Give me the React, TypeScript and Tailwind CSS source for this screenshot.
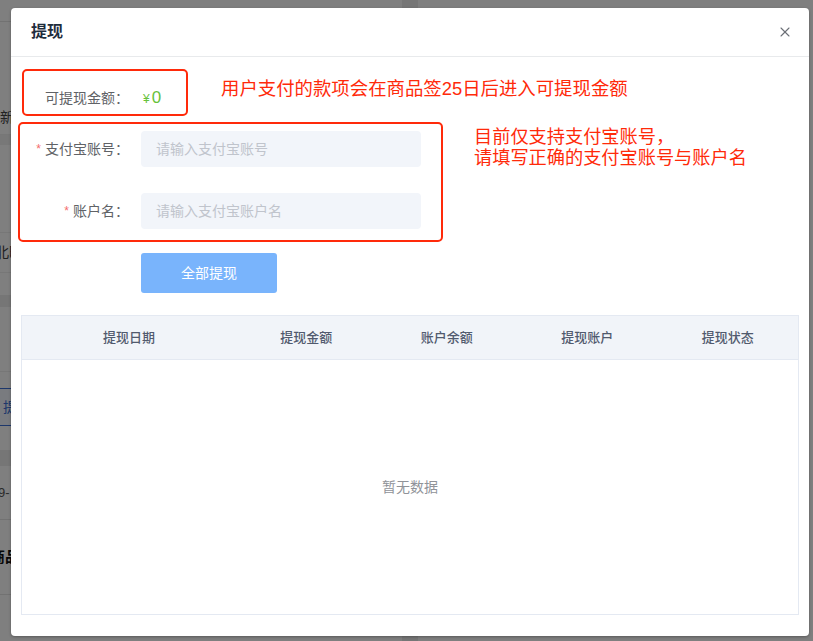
import React from "react";
import { X } from "lucide-react";

const font = { fontFamily: "'Liberation Sans', 'Noto Sans CJK SC', sans-serif" };

function BackgroundPage() {
  return (
    <div className="flex h-[641px] w-[813px] bg-white text-[14px] text-[#333]">
      <div className="flex w-[402px] flex-col">
        <div className="h-[22px] border-b border-[#e5e5e5]" />
        <div className="h-[78px]" />
        <div className="flex h-[35px] items-center border-b border-[#eee]">
          <span className="-ml-[14px] text-[14px] text-[#444]">更新</span>
        </div>
        <div className="h-[10px] bg-[#f0f0f0]" />
        <div className="h-[88px] border-b border-[#eee]" />
        <div className="flex h-[40px] items-center border-b border-[#eee]">
          <span className="-ml-[5px] text-[14px] text-[#444]">北时</span>
        </div>
        <div className="h-[22px]" />
        <div className="h-[12px] bg-[#ececec]" />
        <div className="h-[65px] border-b border-[#eee]" />
        <div className="flex h-[70px] items-center">
          <span className="-ml-[6px] flex h-[38px] items-center border border-[#3b6fd6] bg-[#f3f7ff] px-[8px] text-[14px] text-[#3b6fd6]">
            提货
          </span>
        </div>
        <div className="h-[8px]" />
        <div className="h-[16px] bg-[#ececec]" />
        <div className="flex h-[54px] items-center border-b border-[#e5e5e5]">
          <span className="-ml-[2px] text-[13px] text-[#555]">9-</span>
        </div>
        <div className="flex h-[75px] items-center border-b border-[#e5e5e5]">
          <span className="-ml-[10px] text-[15px] font-bold text-[#111]">商品</span>
        </div>
        <div className="flex-1" />
      </div>
      <div className="w-[16px] bg-[#ececec]" />
      <div className="flex-1" />
    </div>
  );
}

function FormRow({
  label,
  required,
  children,
  className,
}: {
  label: string;
  required?: boolean;
  children: React.ReactNode;
  className?: string;
}) {
  return (
    <div className={"flex items-center " + (className ?? "")}>
      <div className="flex w-[120px] shrink-0 items-center justify-end pr-[12px] text-[14px] text-[#606266]">
        {required && <span className="mr-[4px] text-[12px] text-[#f56c6c]">*</span>}
        <span>{label}</span>
      </div>
      {children}
    </div>
  );
}

function Input({ placeholder }: { placeholder: string }) {
  return (
    <div className="flex h-[36px] w-[280px] items-center rounded-[4px] bg-[#f2f5fa] pl-[15px] text-[14px] text-[#c0c4cc]">
      {placeholder}
    </div>
  );
}

export default function App() {
  const cols = ["提现日期", "提现金额", "账户余额", "提现账户", "提现状态"];
  return (
    <div className="relative h-[641px] w-[813px] overflow-hidden" style={font}>
      <BackgroundPage />
      <div className="absolute inset-0 bg-black/50" />
      <div className="absolute left-[11px] top-[8px] flex h-[628px] w-[798px] flex-col rounded-[4px] bg-white shadow-[0_1px_3px_rgba(0,0,0,0.3)]">
        <div className="flex h-[49px] shrink-0 items-center justify-between border-b border-[#e8eaec] pl-[20px] pr-[16px]">
          <span className="text-[16px] font-bold text-[#1f2d3d]">提现</span>
          <X size={16} strokeWidth={1.6} className="text-[#6b6f76]" />
        </div>
        <div className="relative flex flex-1 flex-col px-[10px] pb-[21px] pt-[21px]">
          <FormRow label="可提现金额：" className="h-[40px]">
            <span className="flex items-baseline text-[#67c23a]">
              <span className="ml-[2px] text-[12px]">¥</span>
              <span className="ml-[2px] text-[17px]">0</span>
            </span>
          </FormRow>
          <FormRow label="支付宝账号：" required className="mt-[13px]">
            <Input placeholder="请输入支付宝账号" />
          </FormRow>
          <FormRow label="账户名：" required className="mt-[26px]">
            <Input placeholder="请输入支付宝账户名" />
          </FormRow>
          <div className="ml-[120px] mt-[24px] flex h-[40px] w-[136px] items-center justify-center rounded-[3px] bg-[#79b4fc] text-[14px] text-white">
            全部提现
          </div>
          <div className="mt-[22px] flex flex-1 flex-col border border-[#e4e9f2]">
            <div className="flex h-[44px] shrink-0 border-b border-[#e4e9f2] bg-[#f1f4f9] text-[13px] font-medium text-[#515a6e]">
              {cols.map((c, i) => (
                <div
                  key={c}
                  className={
                    "flex items-center justify-center " + (i === 0 ? "w-[214px]" : "flex-1")
                  }
                >
                  {c}
                </div>
              ))}
            </div>
            <div className="flex flex-1 items-center justify-center text-[14px] text-[#909399]">
              暂无数据
            </div>
          </div>

          {/* annotations */}
          <div className="absolute left-[11px] top-[12px] h-[47px] w-[166px] rounded-[5px] border-2 border-[#ff2a0a]" />
          <div className="absolute left-[7px] top-[65px] h-[120px] w-[425px] rounded-[5px] border-2 border-[#ff2a0a]" />
          <div className="absolute left-[210px] top-[21px] text-[18.4px] leading-[22px] text-[#ff2a0a]">
            用户支付的款项会在商品签25日后进入可提现金额
          </div>
          <div className="absolute left-[463px] top-[70px] text-[18.2px] leading-[21px] text-[#ff2a0a]">
            <div>目前仅支持支付宝账号，</div>
            <div>请填写正确的支付宝账号与账户名</div>
          </div>
        </div>
      </div>
    </div>
  );
}
